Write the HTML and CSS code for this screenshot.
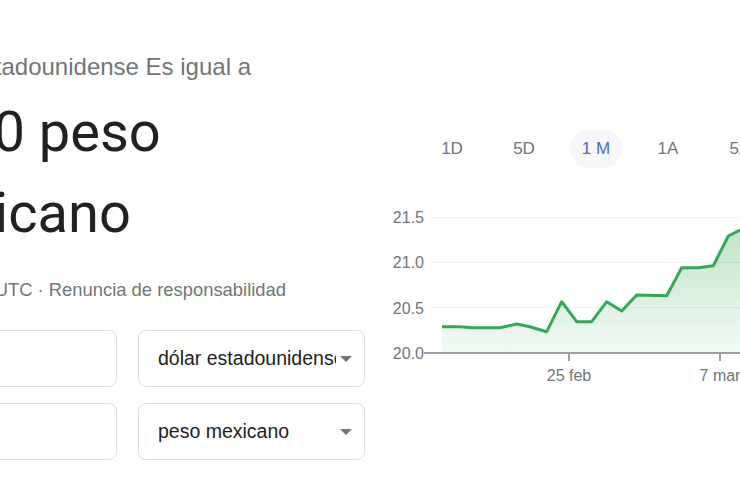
FILE: index.html
```html
<!DOCTYPE html>
<html lang="es">
<head>
    <meta charset="UTF-8">
    <title>Conversor de divisas</title>
    <link rel="stylesheet" href="styles.css">
</head>
<body>
    <div class="converter">
        <!-- Result -->
        <div class="converter-main">
            <div class="rate-label">1 dólar estadounidense Es igual a</div>
            <div class="rate-value">21,40 peso mexicano</div>
            <div class="rate-note">18:03 UTC · Renuncia de responsabilidad</div>

            <!-- Inputs -->
            <div class="converter-row">
                <div class="amount-box"></div>
                <div class="currency-box">
                    <span class="currency-name">dólar estadounidense</span>
                    <span class="caret"></span>
                </div>
            </div>
            <div class="converter-row">
                <div class="amount-box"></div>
                <div class="currency-box">
                    <span class="currency-name">peso mexicano</span>
                    <span class="caret"></span>
                </div>
            </div>
        </div>

        <!-- Chart -->
        <div class="converter-chart">
            <div class="range-tabs">
                <span class="range-tab">1D</span>
                <span class="range-tab">5D</span>
                <span class="range-tab active">1 M</span>
                <span class="range-tab">1A</span>
                <span class="range-tab">5A</span>
                <span class="range-tab">Máx.</span>
            </div>

            <svg class="chart" width="360" height="190" viewBox="0 0 360 190">
                <defs>
                    <linearGradient id="area" x1="0" y1="0" x2="0" y2="1">
                        <stop offset="0" stop-color="#34a853" stop-opacity="0.32"/>
                        <stop offset="1" stop-color="#34a853" stop-opacity="0.06"/>
                    </linearGradient>
                </defs>

                <!-- grid -->
                <g stroke="#f1f1f1" stroke-width="1">
                    <line x1="53" y1="17.5" x2="360" y2="17.5"/>
                    <line x1="53" y1="62.5" x2="360" y2="62.5"/>
                    <line x1="53" y1="107.5" x2="360" y2="107.5"/>
                </g>

                <g class="axis-label" text-anchor="end">
                    <text x="44" y="23">21.5</text>
                    <text x="44" y="68">21.0</text>
                    <text x="44" y="114">20.5</text>
                    <text x="44" y="159">20.0</text>
                </g>

                <polygon fill="url(#area)" points="62,153 62,126.7 80,126.7 93,127.7 120,127.7 136.7,124 150,126.7 166.7,131.7 181.7,101.7 196.7,121.7 211.7,121.7 226.7,101.7 241.7,111 256.7,95 286.7,95.7 301.7,67.7 318.3,67.7 333.3,65.7 348.3,36 360,30 360,153"/>
                <polyline fill="none" stroke="#34a853" stroke-width="3" stroke-linejoin="round" points="62,126.7 80,126.7 93,127.7 120,127.7 136.7,124 150,126.7 166.7,131.7 181.7,101.7 196.7,121.7 211.7,121.7 226.7,101.7 241.7,111 256.7,95 286.7,95.7 301.7,67.7 318.3,67.7 333.3,65.7 348.3,36 360,30"/>

                <!-- axis -->
                <g stroke="#9aa0a6" stroke-width="2">
                    <line x1="44" y1="153" x2="360" y2="153"/>
                    <line x1="189" y1="153" x2="189" y2="161"/>
                    <line x1="340" y1="153" x2="340" y2="161"/>
                </g>
                <g class="axis-label" text-anchor="middle">
                    <text x="189" y="181">25 feb</text>
                    <text x="340" y="181">7 mar</text>
                </g>
            </svg>
        </div>
    </div>
</body>
</html>
```

FILE: styles.css
```css
/* Page */
html, body {
    margin: 0;
    width: 740px;
    height: 499px;
    overflow: hidden;
    background-color: #ffffff;
}

body {
    font-family: "Liberation Sans", Arial, sans-serif;
}

/* Whole widget, left edge runs off the page */
.converter {
    display: flex;
    gap: 15px;
    margin-left: -112px;
}

.converter-main {
    width: 477px;
    flex-shrink: 0;
    padding-top: 53px;
}

/* the start of these lines sits past the left edge */
.rate-label {
    color: #70757a;
    font-size: 24px;
    line-height: 28px;
    width: 363px;
    text-align: right;
    white-space: nowrap;
}

.rate-value {
    color: #202124;
    font-family: Roboto, "Noto Sans", sans-serif;
    font-size: 56px;
    line-height: 81px;
    margin-top: 11px;
    width: 290px;
}

.rate-note {
    color: #70757a;
    font-size: 18.4px;
    line-height: 22px;
    margin-top: 25px;
    width: 398px;
    text-align: right;
    white-space: nowrap;
}

/* Input rows */
.converter-row {
    display: flex;
    gap: 21px;
    margin-top: 16px;
}

.rate-note + .converter-row {
    margin-top: 29px;
}

.amount-box,
.currency-box {
    width: 229px;
    height: 57px;
    border: 1px solid #dadce0;
    border-radius: 8px;
    box-sizing: border-box;
}

.currency-box {
    width: 227px;
    display: flex;
    align-items: center;
    position: relative;
    padding: 0 28px 0 19px;
}

.currency-name {
    color: #202124;
    font-size: 19.5px;
    white-space: nowrap;
    overflow: hidden;
}

.caret {
    position: absolute;
    right: 12px;
    top: 25px;
    border-left: 6px solid transparent;
    border-right: 6px solid transparent;
    border-top: 6px solid #70757a;
}

/* Chart side */
.converter-chart {
    width: 420px;
    flex-shrink: 0;
    padding-top: 130px;
}

.range-tabs {
    display: flex;
    gap: 20px;
    padding-left: 46px;
    white-space: nowrap;
}

.range-tab {
    width: 52px;
    height: 38px;
    line-height: 38px;
    text-align: center;
    flex-shrink: 0;
    color: #70757a;
    font-size: 17px;
    border-radius: 19px;
}

.range-tab.active {
    color: #4a67d6;
    background-color: #f5f7fb;
}

.chart {
    display: block;
    margin-top: 32px;
}

.axis-label {
    fill: #70757a;
    font-family: "Liberation Sans", Arial, sans-serif;
    font-size: 16px;
}
```
